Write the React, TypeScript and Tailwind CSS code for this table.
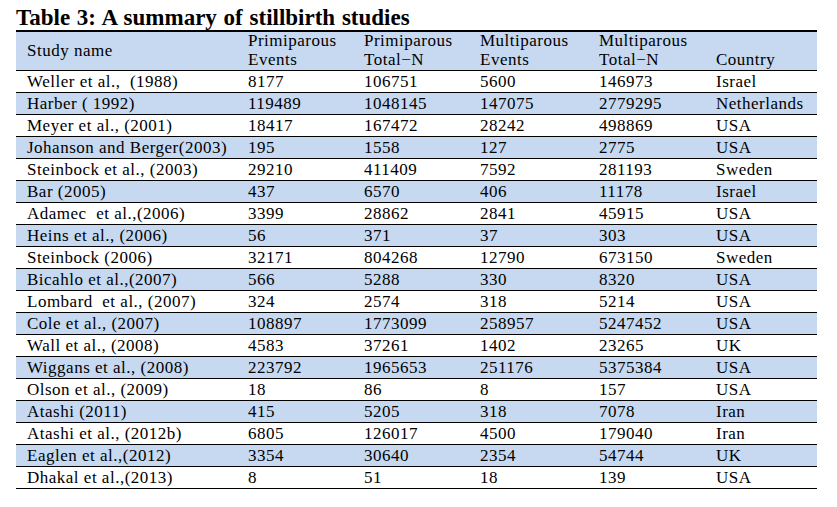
import React from "react";

const rows: [string, string, string, string, string, string][] = [
  ["Weller et al.,  (1988)", "8177", "106751", "5600", "146973", "Israel"],
  ["Harber ( 1992)", "119489", "1048145", "147075", "2779295", "Netherlands"],
  ["Meyer et al., (2001)", "18417", "167472", "28242", "498869", "USA"],
  ["Johanson and Berger(2003)", "195", "1558", "127", "2775", "USA"],
  ["Steinbock et al., (2003)", "29210", "411409", "7592", "281193", "Sweden"],
  ["Bar (2005)", "437", "6570", "406", "11178", "Israel"],
  ["Adamec  et al.,(2006)", "3399", "28862", "2841", "45915", "USA"],
  ["Heins et al., (2006)", "56", "371", "37", "303", "USA"],
  ["Steinbock (2006)", "32171", "804268", "12790", "673150", "Sweden"],
  ["Bicahlo et al.,(2007)", "566", "5288", "330", "8320", "USA"],
  ["Lombard  et al., (2007)", "324", "2574", "318", "5214", "USA"],
  ["Cole et al., (2007)", "108897", "1773099", "258957", "5247452", "USA"],
  ["Wall et al., (2008)", "4583", "37261", "1402", "23265", "UK"],
  ["Wiggans et al., (2008)", "223792", "1965653", "251176", "5375384", "USA"],
  ["Olson et al., (2009)", "18", "86", "8", "157", "USA"],
  ["Atashi (2011)", "415", "5205", "318", "7078", "Iran"],
  ["Atashi et al., (2012b)", "6805", "126017", "4500", "179040", "Iran"],
  ["Eaglen et al.,(2012)", "3354", "30640", "2354", "54744", "UK"],
  ["Dhakal et al.,(2013)", "8", "51", "18", "139", "USA"],
];

const grid =
  "grid grid-cols-[221px_116px_116px_119px_117px_1fr] pl-[11px]";

export default function App() {
  return (
    <div
      className="w-[837px] h-[507px] bg-white text-black"
      style={{ fontFamily: '"Liberation Serif", "Times New Roman", serif' }}
    >
      <div className="pl-[16px] pt-[6px] h-[30px] leading-[24px] text-[23px] font-bold whitespace-nowrap [word-spacing:1px]">
        Table 3: A summary of stillbirth studies
      </div>
      <div className="ml-[16px] w-[801px] border-t-2 border-black text-[17px] tracking-[0.5px]">
        <div
          className={`${grid} h-[39px] bg-[#c6d9f1] border-b border-black leading-[18.5px]`}
        >
          <div className="self-center">Study name</div>
          <div className="self-end pb-[1px]">Primiparous<br />Events</div>
          <div className="self-end pb-[1px]">Primiparous<br />Total−N</div>
          <div className="self-end pb-[1px]">Multiparous<br />Events</div>
          <div className="self-end pb-[1px]">Multiparous<br />Total−N</div>
          <div className="self-end pb-[1px]">Country</div>
        </div>
        {rows.map((r, i) => (
          <div
            key={i}
            className={`${grid} h-[22px] items-center border-b border-black leading-[21px] ${
              i % 2 === 1 ? "bg-[#c6d9f1]" : "bg-white"
            }`}
          >
            {r.map((c, j) => (
              <div key={j} className="whitespace-pre">
                {c}
              </div>
            ))}
          </div>
        ))}
      </div>
    </div>
  );
}
